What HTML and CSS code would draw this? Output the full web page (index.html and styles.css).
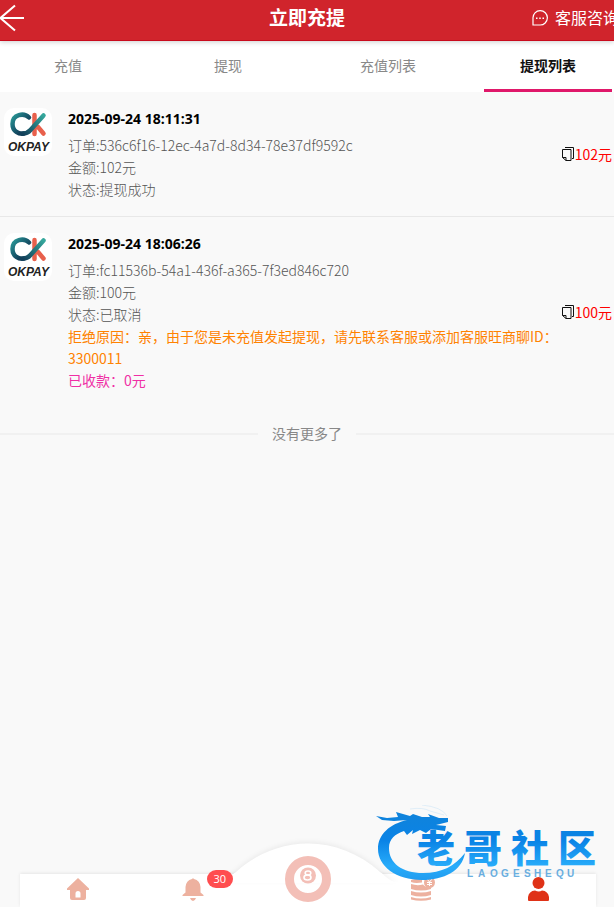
FILE: index.html
```html
<!DOCTYPE html>
<html lang="zh-CN">
<head>
<meta charset="utf-8">
<meta name="viewport" content="width=device-width, initial-scale=1">
<title>立即充提</title>
<link rel="stylesheet" href="styles.css">
</head>
<body>
<svg class="defs" aria-hidden="true">
  <defs>
    <linearGradient id="teal" x1="0" y1="0" x2="1" y2="1">
      <stop offset="0" stop-color="#2b9a97"/><stop offset=".3" stop-color="#1d6f7c"/><stop offset=".7" stop-color="#12405a"/>
    </linearGradient>
    <linearGradient id="arm" x1="1" y1="0" x2="0" y2="1">
      <stop offset="0" stop-color="#35a79c"/><stop offset="1" stop-color="#12405a"/>
    </linearGradient>
    <symbol id="okpay" viewBox="0 0 48 48">
      <path d="M30.500 7v19M34 19l5.500 6.500" fill="none" stroke="#e8604c" stroke-width="4.500" stroke-linecap="round"/>
      <path d="M25 9.500C20 4.500 8.500 6 8.500 16C8.500 23.500 15 26.500 20 25.500" fill="none" stroke="url(#teal)" stroke-width="4.500" stroke-linecap="round"/>
      <path d="M39.500 7.500L26.500 22q-3 3.500-8 3.500" fill="none" stroke="url(#arm)" stroke-width="4.500" stroke-linecap="round"/>
      <text x="4" y="43" class="okpay-name">OKPAY</text>
    </symbol>
    <symbol id="copy" viewBox="0 0 12 14">
      <path d="M3 .5h8.500v11H10" fill="none" stroke="#111"/>
      <path d="M.500 2.500h8.500v11H4L.500 10.500zM.500 10.500H4v3" fill="none" stroke="#111"/>
    </symbol>
  </defs>
</svg>

<header class="topbar">
  <button class="back" type="button" aria-label="返回">
    <svg viewBox="0 0 26 28" width="26" height="28"><path d="M16 1.500L1.500 14L16 26.500M1.500 14H25" fill="none" stroke="#fff" stroke-width="2"/></svg>
  </button>
  <h1 class="title">立即充提</h1>
  <a class="service" href="#service">
    <svg viewBox="0 0 16 16" width="16" height="16"><path d="M1 15V8a7.200 7.200 0 1 1 7 7z" fill="none" stroke="#fff" stroke-width="1.200"/><path d="M4 7.500h1.500v1.500H4zM7.250 7.500h1.500v1.500h-1.500zM10.500 7.500H12v1.500h-1.500z" fill="#fff"/></svg>
    <span>客服咨询</span>
  </a>
</header>

<nav class="tabs">
  <a class="tab" href="#deposit">充值</a>
  <a class="tab" href="#withdraw">提现</a>
  <a class="tab" href="#deposits">充值列表</a>
  <a class="tab active" href="#withdrawals" aria-current="page">提现列表</a>
</nav>

<main class="content">
  <ul class="records">
    <li class="record">
      <svg class="brand" role="img" aria-label="OKPAY"><use href="#okpay"/></svg>
      <div class="details">
        <h2 class="date">2025-09-24 18:11:31</h2>
        <p>订单:536c6f16-12ec-4a7d-8d34-78e37df9592c</p>
        <p>金额:102元</p>
        <p>状态:提现成功</p>
      </div>
      <button class="amount" type="button"><svg class="copy" aria-hidden="true"><use href="#copy"/></svg>102元</button>
    </li>
    <li class="record">
      <svg class="brand" role="img" aria-label="OKPAY"><use href="#okpay"/></svg>
      <div class="details">
        <h2 class="date">2025-09-24 18:06:26</h2>
        <p>订单:fc11536b-54a1-436f-a365-7f3ed846c720</p>
        <p>金额:100元</p>
        <p>状态:已取消</p>
        <p class="reason">拒绝原因：亲，由于您是未充值发起提现，请先联系客服或添加客服旺商聊ID：3300011</p>
        <p class="received">已收款：0元</p>
      </div>
      <button class="amount" type="button"><svg class="copy" aria-hidden="true"><use href="#copy"/></svg>100元</button>
    </li>
  </ul>
  <p class="end">没有更多了</p>
</main>

<footer class="dock">
  <svg class="dome" viewBox="0 0 184 40" aria-hidden="true"><path d="M0 40C10 40 14 33 20 29C62 -9 122 -9 164 29C170 33 174 40 184 40z" fill="#fff"/></svg>
  <nav class="dock-items">
    <a class="dock-item" href="#home" aria-label="首页">
      <svg viewBox="0 0 22 22" width="22" height="22"><path d="M11 0L0 10.500v1.500h3v8q0 2 2 2h12q2 0 2-2v-8h3v-1.500zM8.500 19.500v-4a2.500 2.500 0 0 1 5 0v4z" fill="#edb19f" fill-rule="evenodd"/></svg>
    </a>
    <a class="dock-item" href="#messages" aria-label="消息 30">
      <svg viewBox="0 0 22 24" width="22" height="24"><path d="M10 2a1.200 1.200 0 0 1 2 0q6 1.500 6.500 8v5.500l3 2.500v1H.500v-1l3-2.500V10Q4 3.500 10 2zM8 21h6q-1 3-3 3t-3-3z" fill="#edb19f"/></svg>
      <span class="badge">30</span>
    </a>
    <a class="dock-item ball" href="#play" aria-label="8">
      <svg viewBox="0 0 46 46" width="46" height="46"><circle cx="23" cy="23" r="18.500" fill="none" stroke="#f3bfb7" stroke-width="9"/><circle cx="23" cy="19.500" r="8" fill="#f3bfb7"/><ellipse cx="23" cy="17" rx="2.800" ry="2" fill="none" stroke="#fff" stroke-width="1.600"/><ellipse cx="22.500" cy="21.500" rx="3.500" ry="2.500" fill="none" stroke="#fff" stroke-width="1.600"/></svg>
    </a>
    <a class="dock-item" href="#wallet" aria-label="钱包">
      <svg viewBox="0 0 24 24" width="24" height="24"><path d="M0 3q5-2 11-1.500v4Q4 6.500 0 5zM0 7q6 2 12 .5q2 3 8 3v1.500q-10 3-20 0zM0 14q10 3 20 0v4q-10 3-20 0zM0 20q10 3 20 0v2.500q-10 2.500-20 0z" fill="#edb19f"/><circle cx="18.500" cy="5.500" r="5.500" fill="#edb19f"/><path d="M16 2l2.500 3L21 2M18.500 5v4M16 5.500h5M16 7.500h5" fill="none" stroke="#fff"/></svg>
    </a>
    <a class="dock-item" href="#me" aria-label="我的" aria-current="page">
      <svg viewBox="0 0 20 24" width="20" height="24"><circle cx="10.500" cy="6" r="6" fill="#df3217"/><path d="M0 23v-3q1-6 7-6.500q4 2 7 0q6 .5 7 6.500v3q0 1-1 1H1q-1 0-1-1z" fill="#df3217"/></svg>
    </a>
  </nav>
</footer>

<svg class="watermark" viewBox="0 0 224 76" width="224" height="76" role="img" aria-label="老哥社区">
  <defs><linearGradient id="blue" gradientUnits="userSpaceOnUse" x1="0" y1="10" x2="0" y2="74">
    <stop offset="0" stop-color="#0f83dc"/><stop offset=".4" stop-color="#0a83e6"/><stop offset=".8" stop-color="#28acfa"/><stop offset="1" stop-color="#229df0"/>
  </linearGradient></defs>
  <path d="M31 15C14 19 2 29 2 44C2 61 20 75 46 75C68 75 86 66 89 48C79 61 66 68 47 68C26 68 13 58 13 43C13 34 19 29 28 26L31 30L37 25L36 29L44 25L50 28L55 24L69 26L70 21L60 20L72 17L72 13L63 13L52 9L54 12L46 12L37 9L34 11L20 7L22 12L11 13L0 11L6 15L18 16z" fill="url(#blue)"/>
  <path d="M34 4q13-2 20 2l14 4M46 0q20 2 25 11" fill="none" stroke="#cfe6f6" stroke-width=".6"/>
  <text class="mark-name" x="41 88 135 182" y="57" fill="url(#blue)">老哥社区</text>
  <text class="mark-latin" x="91 102 114 125 137 148 158 169 180 191" y="72">LAOGESHEQU</text>
</svg>
</body>
</html>
```
FILE: styles.css
```css
* { box-sizing: border-box; }

body {
  margin: 0;
  min-height: 100vh;
  display: flex;
  flex-direction: column;
  position: relative;
  overflow-x: hidden;
  background: #f9f9f9;
  color: #555;
  font: 300 14px/22px "Open Sans", "Noto Sans CJK SC", sans-serif;
}

h1, h2, p, ul { margin: 0; padding: 0; }
a { color: inherit; text-decoration: none; }
button { padding: 0; border: 0; background: none; color: inherit; font: inherit; cursor: pointer; }
svg { display: block; flex: none; }
.defs { position: absolute; width: 0; height: 0; }

.topbar {
  position: relative;
  z-index: 1;
  display: grid;
  grid-template-columns: 1fr auto 1fr;
  align-items: center;
  height: 41px;
  padding-bottom: 5px;
  background: #d0242c;
  border-bottom: 1px solid #c90a1c;
  box-shadow: 0 1px 5px rgba(0, 0, 0, .2);
  color: #fff;
}
.back { justify-self: start; margin-left: -1px; }
.title { font-size: 19px; font-weight: 700; }
.service {
  display: flex;
  align-items: center;
  gap: 7px;
  width: 0;
  margin-left: auto;
  margin-right: 82px;
  font-size: 16px;
  font-weight: 400;
  white-space: nowrap;
}

.tabs {
  display: grid;
  grid-template-columns: repeat(4, 1fr);
  margin: 0 -14px 0 -12px;
  background: #fff;
  color: #888;
  font-weight: 400;
}
.tab {
  display: flex;
  align-items: center;
  justify-content: center;
  height: 51px;
  padding-bottom: 2px;
}
.tab.active {
  color: #111;
  font-weight: 700;
  background: linear-gradient(#e0186a, #e0186a) bottom / 80% 3px no-repeat;
}

.content { flex: 1; }
.records { list-style: none; }
.record {
  display: flex;
  align-items: center;
  padding: 16px 2px 16px 4px;
}
.record + .record { border-top: 1px solid #e8e8e8; }
.brand {
  align-self: flex-start;
  width: 48px;
  height: 48px;
  margin-right: 16px;
  border-radius: 10px;
  background: #fff;
}
.okpay-name { font: italic 700 12px "Liberation Sans", sans-serif; fill: #222; }
.details { flex: 1; min-width: 0; }
.details p, .amount { font-family: "Noto Sans CJK SC", sans-serif; }
.date {
  margin-bottom: 4px;
  color: #000;
  font-size: 14px;
  font-weight: 700;
  line-height: 22px;
}
.details .reason { color: #ff8200; font-weight: 400; }
.details .received { color: #f02fa5; font-weight: 400; }
.amount { display: flex; align-items: center; gap: 1px; color: #f00; font-weight: 400; }
.copy { width: 12px; height: 14px; }

.end {
  display: flex;
  align-items: center;
  gap: 14px;
  margin-top: 16px;
  color: #888;
  font-weight: 400;
}
.end::before, .end::after { content: ""; flex: 1; height: 2px; background: #f1f1f1; }

.dock {
  position: relative;
  margin: 0 18px 0 20px;
  background: #fff;
  box-shadow: 0 -1px 3px rgba(0, 0, 0, .08);
}
.dome {
  position: absolute;
  bottom: 24px;
  left: 50%;
  width: 184px;
  margin-left: -92px;
  filter: drop-shadow(0 -2px 2px rgba(0, 0, 0, .05));
}
.dock-items { position: relative; display: grid; grid-template-columns: repeat(5, 1fr); height: 33px; padding-bottom: 4px; }
.dock-item { position: relative; display: flex; align-items: center; justify-content: center; }
.dock-item svg { overflow: visible; }
.ball svg { margin-top: -20px; }
.badge {
  position: absolute;
  top: -4px;
  left: calc(50% + 14px);
  width: 26px;
  border-radius: 9px;
  background: #ff4d4f;
  color: #fff;
  font-size: 11px;
  font-weight: 400;
  line-height: 18px;
  text-align: center;
}

.watermark { position: absolute; right: 14px; bottom: 26px; pointer-events: none; }
.mark-name { font: 900 38px "Noto Sans CJK SC", sans-serif; }
.mark-latin { font: 700 10px "Liberation Sans", sans-serif; fill: #69aee0; }
```
